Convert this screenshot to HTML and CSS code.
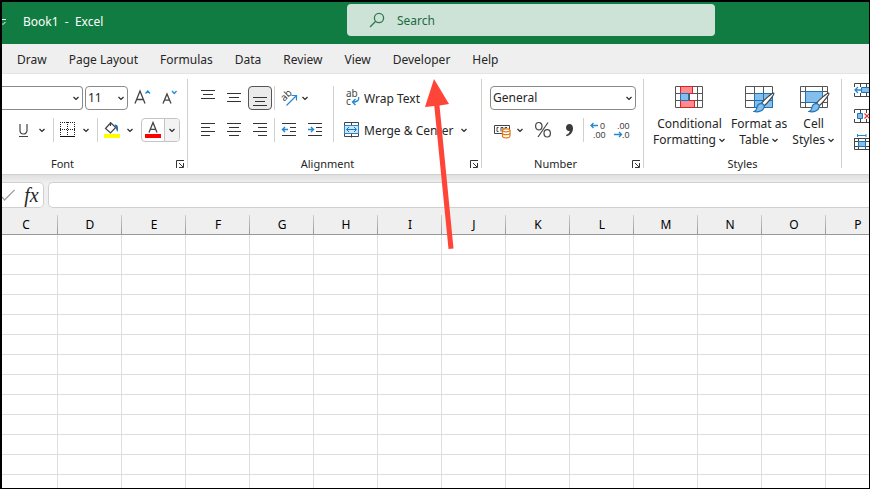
FILE: index.html
```
<!DOCTYPE html>
<html lang="en">
<head>
<meta charset="utf-8">
<title>Book1 - Excel</title>
<link rel="stylesheet" href="styles.css">
</head>
<body>
<svg class="defs" aria-hidden="true">
  <symbol id="caret" viewBox="0 0 8 8"><path d="M1.500 3 4 5.500 6.500 3" fill="none" stroke="#262626" stroke-width="1.200"/></symbol>
  <symbol id="launcher" viewBox="0 0 8 8"><path d="M.5 8V.5H8M3 3l4 4M7.500 3v4.500H3" fill="none" stroke="#333" stroke-width="1"/></symbol>
  <symbol id="brush" viewBox="0 0 22 22"><path d="M20.800 1.200c1.200 1-7 10.500-9.600 12.600L8.400 11.400C11 8 19.600.2 20.800 1.200Z" fill="#fff" stroke="#444" stroke-width="1.200"/><path d="M8.500 11.600c1.800.2 3 1.400 2.700 3.200-.6 3.800-5.200 5.800-10.200 4.700 1.900-.6 2.500-1.700 2.800-3.500.4-2.700 2.200-4.600 4.700-4.400Z" fill="#83beec" stroke="#1e73b8" stroke-width="1.200"/></symbol>
</svg>

<header class="titlebar">
  <div class="titlebar__left">
    <svg class="qat" width="4" height="8" viewBox="0 0 4 8"><path d="M0 1.500h4M0 5.500 1 6.500 3.500 4" fill="none" stroke="#fff"/></svg>
    <h1 class="titlebar__title">Book1 &nbsp;- &nbsp;Excel</h1>
  </div>
  <label class="search">
    <svg width="16" height="16" viewBox="0 0 16 16"><g fill="none" stroke="#2f7a50" stroke-width="1.300"><circle cx="10" cy="6" r="4.600"/><path d="M6.700 9.300 1 15"/></g></svg>
    <input type="search" placeholder="Search" aria-label="Search">
  </label>
</header>

<nav class="tabs">
  <a href="#">Draw</a><a href="#">Page Layout</a><a href="#">Formulas</a><a href="#">Data</a><a href="#">Review</a><a href="#">View</a><a href="#">Developer</a><a href="#">Help</a>
</nav>

<section class="ribbon" aria-label="Ribbon">
  <div class="group group--font">
    <div class="rows">
      <div class="row">
        <div class="combo combo--font"><select aria-label="Font"><option></option></select><svg width="8" height="8"><use href="#caret"/></svg></div>
        <div class="combo combo--size"><select aria-label="Font size"><option>11</option></select><svg width="8" height="8"><use href="#caret"/></svg></div>
        <button class="tool" aria-label="Increase font size"><svg width="18" height="18" viewBox="0 0 18 18"><path d="M2 14.500 7 2l5 12.500M3.700 10.500h6.600" fill="none" stroke="#444" stroke-width="1.300"/><path d="m12.500 4.500 2.300-2.500L17 4.500" fill="none" stroke="#2488d0" stroke-width="1.300"/></svg></button>
        <button class="tool" aria-label="Decrease font size"><svg width="18" height="18" viewBox="0 0 18 18"><path d="m4 14.500 4-9.500 4 9.500M5.400 11.200h5.200" fill="none" stroke="#444" stroke-width="1.300"/><path d="m13 2 2.300 2.500L17.500 2" fill="none" stroke="#2488d0" stroke-width="1.300"/></svg></button>
      </div>
      <div class="row row--format">
        <button class="tool" aria-label="Underline"><svg width="18" height="18" viewBox="0 0 18 18"><path d="M5 3v6.500a3.500 3.500 0 0 0 7 0V3M4 15.500h9" fill="none" stroke="#444" stroke-width="1.200"/></svg></button>
        <button class="caret" aria-label="Underline options"><svg width="8" height="8"><use href="#caret"/></svg></button>
        <i class="sep"></i>
        <button class="tool" aria-label="Borders"><svg width="16" height="16" viewBox="0 0 16 16"><path d="M0 .5h15M0 7.500h15M.5 0v14M7.500 0v14M14.500 0v14" fill="none" stroke="#222" stroke-dasharray="1 1"/><path d="M0 14.500h15" stroke="#111"/></svg></button>
        <button class="caret" aria-label="Border options"><svg width="8" height="8"><use href="#caret"/></svg></button>
        <i class="sep"></i>
        <button class="tool" aria-label="Fill color"><svg width="18" height="18" viewBox="0 0 18 18"><path d="M7.500 1v4M7 2.500 2.500 7.500l5 4.500 5.200-5.500L8 2" fill="#fff" stroke="#444" stroke-width="1.200"/><path d="M11.500 3.500c3-.8 4.500 2.500 3 7.500C13 9 13 6.500 11.500 3.500Z" fill="#1e6fb5"/><path d="M1 13h16v4H1z" fill="#ff0"/></svg></button>
        <button class="caret" aria-label="Fill color options"><svg width="8" height="8"><use href="#caret"/></svg></button>
        <span class="split">
          <button aria-label="Font color"><svg width="18" height="18" viewBox="0 0 18 18"><path d="M5 11.500 9 1.500l4 10M6.300 8.300h5.400" fill="none" stroke="#444" stroke-width="1.300"/><path d="M1 13h16v4H1z" fill="red"/></svg></button>
          <button class="split__more" aria-label="Font color options"><svg width="8" height="8"><use href="#caret"/></svg></button>
        </span>
      </div>
    </div>
    <div class="caption caption--font"><h2>Font</h2><button aria-label="Font settings"><svg width="8" height="8"><use href="#launcher"/></svg></button></div>
  </div>
  <i class="divider"></i>

  <div class="group group--align">
    <div class="cols">
      <div class="rows rows--align">
        <div class="row">
          <button class="tool" aria-label="Top align"><svg width="16" height="16" viewBox="0 0 16 16"><path d="M1 .5h14M3 4.500h10M1 8.500h14" stroke="#333"/></svg></button>
          <button class="tool" aria-label="Middle align"><svg width="16" height="16" viewBox="0 0 16 16"><path d="M1 3.500h14M3 7.500h10M1 11.500h14" stroke="#333"/></svg></button>
          <button class="tool tool--on" aria-label="Bottom align"><svg width="16" height="16" viewBox="0 0 16 16"><path d="M1 7.500h14M3 11.500h10M1 15.500h14" stroke="#333"/></svg></button>
          <i class="sep sep--tight"></i>
          <button class="tool tool--angle" aria-label="Orientation"><svg width="18" height="18" viewBox="0 0 18 18"><text class="glyph" transform="translate(5 12) rotate(-45)" x="-1" y="0">ab</text><path d="M6.500 16.500 16 7M11.500 6.500h5v5" fill="none" stroke="#2488d0" stroke-width="1.200"/></svg></button>
          <button class="caret" aria-label="Orientation options"><svg width="8" height="8"><use href="#caret"/></svg></button>
        </div>
        <div class="row">
          <button class="tool" aria-label="Align left"><svg width="16" height="16" viewBox="0 0 16 16"><path d="M1 1.500h14M1 5.500h9M1 9.500h14M1 13.500h9" stroke="#333"/></svg></button>
          <button class="tool" aria-label="Center"><svg width="16" height="16" viewBox="0 0 16 16"><path d="M1 1.500h14M3 5.500h10M1 9.500h14M3 13.500h10" stroke="#333"/></svg></button>
          <button class="tool" aria-label="Align right"><svg width="16" height="16" viewBox="0 0 16 16"><path d="M1 1.500h14M6 5.500h9M1 9.500h14M6 13.500h9" stroke="#333"/></svg></button>
          <i class="sep sep--tight"></i>
          <button class="tool" aria-label="Decrease indent"><svg width="16" height="16" viewBox="0 0 16 16"><path d="M1 1.500h14M9 5.500h6M9 9.500h6M1 13.500h14" stroke="#333"/><path d="M7 7.500H1.500M4 5 1.500 7.500 4 10" fill="none" stroke="#2488d0" stroke-width="1.400"/></svg></button>
          <button class="tool" aria-label="Increase indent"><svg width="16" height="16" viewBox="0 0 16 16"><path d="M1 1.500h14M9 5.500h6M9 9.500h6M1 13.500h14" stroke="#333"/><path d="M1 7.500h5.500M4 5l2.500 2.500L4 10" fill="none" stroke="#2488d0" stroke-width="1.400"/></svg></button>
        </div>
      </div>
      <div class="rows rows--merge">
        <button class="wide wide--wrap"><svg width="16" height="18" viewBox="0 0 16 18"><text class="glyph" x="2" y="8">ab</text><text class="glyph" x="2" y="16">c</text><path d="M14.500 8c1 3-1 5-6 5M11.500 10l-3 3 3 3" fill="none" stroke="#2488d0" stroke-width="1.400"/></svg><span>Wrap Text</span></button>
        <div class="row">
          <button class="wide wide--merge"><svg width="16" height="16" viewBox="0 0 16 16"><path d="M.5.5h14v14H.5zM.5 4.500h14M.5 11.500h14M7.500.5v4M7.500 11.500v4" fill="#fff" stroke="#444"/><path d="M.5 3.500h14v8H.5z" fill="#cfe6f8" stroke="#2488d0"/><path d="M2.500 7.500h10M5 5 2.500 7.500 5 10M10 5l2.500 2.500L10 10" fill="none" stroke="#1878c0"/></svg><span>Merge &amp; Center</span></button>
          <button class="caret" aria-label="Merge options"><svg width="8" height="8"><use href="#caret"/></svg></button>
        </div>
      </div>
    </div>
    <div class="caption"><h2>Alignment</h2><button aria-label="Alignment settings"><svg width="8" height="8"><use href="#launcher"/></svg></button></div>
  </div>
  <i class="divider"></i>

  <div class="group group--number">
    <div class="rows">
      <div class="combo combo--number"><select aria-label="Number format"><option>General</option></select><svg width="8" height="8"><use href="#caret"/></svg></div>
      <div class="row">
        <button class="tool" aria-label="Accounting number format"><svg width="18" height="18" viewBox="0 0 18 18"><path d="M9 12.500H1.500v-8h15V8" fill="none" stroke="#444"/><path d="M5.500 6.500H4v4h1.500M8 10.500v-4h2v2M12 8V6.500h2" fill="none" stroke="#444"/><path d="M9.500 9v6c0 2.500 7.500 2.500 7.500 0V9" fill="#fff" stroke="#e07818" stroke-width="1.200"/><ellipse cx="13.250" cy="9.300" rx="3.750" ry="1.500" fill="#fff" stroke="#e07818" stroke-width="1.200"/><path d="M9.500 12.200c0 2 7.500 2 7.500 0" fill="none" stroke="#e07818" stroke-width="1.200"/></svg></button>
        <button class="caret" aria-label="Accounting options"><svg width="8" height="8"><use href="#caret"/></svg></button>
        <button class="tool tool--percent" aria-label="Percent style"><svg width="18" height="18" viewBox="0 0 18 18"><g fill="none" stroke="#444" stroke-width="1.200"><ellipse cx="4.800" cy="5.200" rx="3.200" ry="3.700"/><ellipse cx="13.200" cy="12.300" rx="3.200" ry="3.700"/><path d="M14 1.500 4 16"/></g></svg></button>
        <button class="tool" aria-label="Comma style"><svg width="16" height="18" viewBox="0 0 16 18"><path d="M8.300 3c2.200 0 3.700 1.500 3.700 4.200 0 4-2.500 7-6.500 8l-.5-1.300c2.200-.8 3.500-2.200 3.700-4C6.700 10.500 5 9 5 6.600 5 4.500 6.500 3 8.300 3Z" fill="#3b3b3b"/></svg></button>
        <i class="sep sep--number"></i>
        <button class="tool" aria-label="Increase decimal"><svg width="18" height="18" viewBox="0 0 18 18"><text class="glyph glyph--digits" x="11" y="8">0</text><text class="glyph glyph--digits" x="4" y="17">.00</text><path d="M9 4.500H2M4.500 2 2 4.500 4.500 7" fill="none" stroke="#2488d0" stroke-width="1.300"/></svg></button>
        <button class="tool" aria-label="Decrease decimal"><svg width="18" height="18" viewBox="0 0 18 18"><text class="glyph glyph--digits" x="4" y="8">.00</text><text class="glyph glyph--digits" x="9" y="17">.0</text><path d="M1 13.500h7.500M6 11l2.500 2.500L6 16" fill="none" stroke="#2488d0" stroke-width="1.300"/></svg></button>
      </div>
    </div>
    <div class="caption"><h2>Number</h2><button aria-label="Number settings"><svg width="8" height="8"><use href="#launcher"/></svg></button></div>
  </div>
  <i class="divider"></i>

  <div class="group group--styles">
    <div class="cols cols--styles">
      <button class="big"><svg width="32" height="30" viewBox="0 0 32 30"><path d="M2.500.5h27v21h-27zM2.500 7.500h27M2.500 14.500h27M7.500.5v21M16.500.5v21M24.500.5v21" fill="#fff" stroke="#555"/><path d="M7.500.5h12v7h-12zM7.500 14.500h14v7h-14z" fill="#ff8b90" stroke="#e02020"/><path d="M7.500 7.500h8v7h-8z" fill="#83beec" stroke="#1e73b8"/></svg><span>Conditional</span><span>Formatting <svg width="8" height="8"><use href="#caret"/></svg></span></button>
      <button class="big"><svg width="32" height="30" viewBox="0 0 32 30"><path d="M2.500.5h27v21h-27zM2.500 7.500h27M2.500 14.500h27M11.500.5v21M20.500.5v21" fill="#fff" stroke="#555"/><path d="M11.500 7.500h18v14h-18zM11.500 14.500h18M20.500 7.500v14" fill="#83beec" stroke="#1e73b8"/><use href="#brush" x="10" y="6" width="22" height="22"/></svg><span>Format as</span><span>Table <svg width="8" height="8"><use href="#caret"/></svg></span></button>
      <button class="big"><svg width="32" height="30" viewBox="0 0 32 30"><path d="M2.500.5h27v21h-27zM2.500 5.500h27M2.500 16.500h27M7.500.5v21M24.500.5v21" fill="#fff" stroke="#555"/><path d="M7.500 5.500h17v11h-17z" fill="#83beec" stroke="#1e73b8"/><use href="#brush" x="10" y="6" width="22" height="22"/></svg><span>Cell</span><span>Styles <svg width="8" height="8"><use href="#caret"/></svg></span></button>
    </div>
    <div class="caption"><h2>Styles</h2></div>
  </div>
  <i class="divider"></i>

  <div class="group group--cells">
    <button aria-label="Insert cells"><svg width="20" height="16" viewBox="0 0 20 16"><path d="M.5 5V1.500h19V5M.5 11v3.500h19V11M6.500 1.500V5M12.500 1.500V5M6.500 11v3.500M12.500 11v3.500" fill="none" stroke="#444"/><path d="M7.500 5.500h12v5h-12z" fill="#83beec" stroke="#1e73b8"/><path d="M8 8H1M4 5 1 8l3 3" fill="none" stroke="#2488d0" stroke-width="1.300"/></svg></button>
    <button aria-label="Delete cells"><svg width="20" height="16" viewBox="0 0 20 16"><path d="M.5 5V1.500h19V5M.5 11v3.500h19V11M6.500 1.500V5M12.500 1.500V5M6.500 11v3.500M12.500 11v3.500" fill="none" stroke="#444"/><path d="M3.500 5.500h5v5h-5z" fill="#83beec" stroke="#1e73b8"/><path d="m10.500 5.500 5 5M15.500 5.500l-5 5" stroke="#e83030" stroke-width="1.200"/></svg></button>
    <button aria-label="Format cells"><svg width="20" height="18" viewBox="0 0 20 18"><path d="M.5 4v11.500h19V4.500H.5M.5 7.500h19M.5 12.500h19M4.500 4.500v11M11.500 4.500v11" fill="none" stroke="#444"/><path d="M4.500 7.500h7v5h-7z" fill="#83beec" stroke="#1e73b8"/><path d="M3 1.500h9M3.500 0v3M12 0v3" stroke="#2488d0"/></svg></button>
  </div>
</section>

<div class="formula">
  <div class="formula__tools">
    <button aria-label="Enter"><svg width="14" height="14" viewBox="0 0 14 14"><path d="m0 9 2.500 3L12.500 2" fill="none" stroke="#a0a0a0" stroke-width="1.200"/></svg></button>
    <button class="fx" aria-label="Insert function">fx</button>
  </div>
  <input type="text" aria-label="Formula bar">
</div>

<main class="sheet">
  <table>
    <thead><tr><th>C</th><th>D</th><th>E</th><th>F</th><th>G</th><th>H</th><th>I</th><th>J</th><th>K</th><th>L</th><th>M</th><th>N</th><th>O</th><th>P</th></tr></thead>
    <tbody id="cells"></tbody>
  </table>
</main>

<svg class="pointer" width="30" height="172" viewBox="0 0 30 172" aria-hidden="true"><path d="M10 0 1 28l9.300-1L24.500 170l5-.5L15.500 26.500 25 25Z" fill="#ff4438"/></svg>
<script src="sheet.js"></script>
</body>
</html>
```
FILE: sheet.js
```
const body = document.getElementById('cells');
for (let r = 0; r < 13; r++) {
  const row = body.insertRow();
  for (let c = 0; c < 14; c++) row.insertCell();
}
```
FILE: styles.css
```
* { box-sizing: border-box; }

html { height: 100%; }

body {
  position: relative;
  display: flex;
  flex-direction: column;
  height: 100%;
  margin: 0;
  overflow: hidden;
  border: solid #000;
  border-width: 2px 1px 1px 2px;
  background: #fff;
  color: #262626;
  font: 12px/16px "Noto Sans", "Open Sans", sans-serif;
}

button, input, select { font: inherit; color: inherit; }
svg { display: block; flex: none; overflow: visible; }
h1, h2 { margin: 0; font: inherit; }

button {
  display: flex;
  align-items: center;
  justify-content: center;
  padding: 0;
  border: 0;
  background: none;
}

.defs { position: absolute; width: 0; height: 0; }

/* Title bar */
.titlebar {
  display: grid;
  grid-template-columns: 345fr 368fr 154fr;
  flex: none;
  height: 42px;
  padding: 2px 0 6px;
  background: #107c41;
  color: #fff;
}
.titlebar__left { display: flex; align-items: center; gap: 17px; padding-top: 2px; }
.search {
  display: flex;
  align-items: center;
  gap: 12px;
  height: 32px;
  padding: 0 22px;
  border-radius: 4px;
  background: #cee3d7;
}
.search input {
  flex: 1;
  min-width: 0;
  padding: 2px 0 0;
  border: 0;
  outline: 0;
  background: none;
}
.search input::placeholder { color: #1b6a3f; opacity: 1; }

/* Tabs */
.tabs {
  display: flex;
  flex: none;
  align-items: center;
  gap: 22px;
  height: 30px;
  padding: 2px 0 0 15px;
  border-bottom: 1px solid #e4e4e4;
  background: #efefef;
}
.tabs a { color: inherit; text-decoration: none; white-space: nowrap; }

/* Ribbon */
.ribbon { display: flex; flex: none; height: 100px; background: #fff; }
.divider { flex: none; width: 1px; margin: 5px 0 6px; background: #d0d0d0; }
.group {
  display: flex;
  flex: none;
  flex-direction: column;
  padding: 12px 0 2px;
}
.group--font { width: 185px; }
.group--align { width: 293px; }
.group--number { width: 161px; }
.group--styles { width: 197px; }
.rows { display: flex; flex-direction: column; gap: 8px; }
.row { display: flex; align-items: center; height: 24px; }
.cols { display: flex; }

.tool { flex: none; width: 24px; height: 24px; }
.tool--on { border: 1px solid #555; border-radius: 4px; background: #ebebeb; }
.caret { flex: none; width: 12px; height: 24px; }
.sep { flex: none; width: 1px; height: 24px; margin: 0 2px 0 5px; background: #d0d0d0; }
.sep--tight { margin: 0; }

.combo { position: relative; flex: none; height: 24px; }
.combo select {
  appearance: none;
  display: block;
  width: 100%;
  height: 24px;
  padding: 0 0 0 2px;
  border: 1px solid #8a8a8a;
  border-radius: 4px;
  background: #fff;
}
.combo svg { position: absolute; top: 8px; right: 3px; pointer-events: none; }
.combo--font { width: 81px; }
.combo--font select { border-left: 0; border-radius: 0 4px 4px 0; }
.combo--size { width: 43px; margin: 0 2px; }
.combo--size + .tool { margin-right: 2px; }

.row--format { padding-left: 10px; }
.split {
  display: flex;
  width: 39px;
  height: 24px;
  margin-left: 5px;
  overflow: hidden;
  border: 1px solid #c4c4c4;
  border-radius: 4px;
}
.split button { width: 22px; }
.split .split__more { width: 15px; border-left: 1px solid #c4c4c4; background: #f3f3f3; }

.rows--align { width: 146px; padding-left: 8px; border-right: 1px solid #d0d0d0; }
.rows--align .row { gap: 2px; }
.rows--align .tool--angle + .caret { margin-left: -4px; }
.rows--merge { padding-left: 10px; }
.wide { gap: 4px; height: 24px; justify-content: flex-start; white-space: nowrap; }
.wide span { padding-top: 2px; }
.wide--merge { width: 114px; }

.group--number { padding-left: 8px; }
.combo--number { width: 146px; }
.tool--percent { margin: 0 2px 0 5px; }
.sep--number { margin: 0 2px; }
.group--number .caption { margin-left: -8px; }

.cols--styles { gap: 5px; padding-left: 9px; }
.big {
  flex-direction: column;
  justify-content: flex-start;
  height: 62px;
  white-space: nowrap;
}
.big span { display: flex; align-items: center; gap: 2px; }

.caption { display: flex; align-items: center; margin-top: auto; font-size: 11px; }
.caption h2 { flex: 1; text-align: center; }
.caption button { width: 14px; height: 16px; }
.caption--font h2 { padding-right: 50px; }

.group--cells {
  flex: 1;
  gap: 10px;
  align-items: flex-start;
  min-width: 0;
  padding: 8px 0 0 12px;
  overflow: hidden;
}

/* Formula bar */
.formula {
  display: flex;
  flex: none;
  gap: 4px;
  padding-top: 7px;
  border-top: 1px solid #cfcfcf;
  background: linear-gradient(#e0e0e0, #efefef 8px);
}
.formula__tools {
  display: flex;
  width: 42px;
  height: 26px;
  border: 1px solid #d0d0d0;
  border-left: 0;
  border-radius: 0 5px 5px 0;
  background: #fff;
}
.fx { flex: 1; padding-left: 4px; font: italic 20px/20px "Liberation Serif", serif; }
.formula input {
  flex: 1;
  min-width: 0;
  height: 26px;
  border: 1px solid #d0d0d0;
  border-right: 0;
  border-radius: 5px 0 0 5px;
  background: #fff;
}

/* Sheet: the first visible column is scrolled partly out of view */
.sheet { flex: 1; min-height: 0; overflow: hidden; }
table {
  width: 896px;
  margin-left: -8px;
  border-collapse: separate;
  border-spacing: 0;
  table-layout: fixed;
}
th {
  height: 27px;
  padding: 8px 0 0;
  border-bottom: 1px solid #999;
  background: linear-gradient(#ccc, #999) right bottom / 1px 19px no-repeat #efefef;
  color: #000;
  font-weight: 400;
}
td {
  height: 20px;
  padding: 0;
  border: solid #dedede;
  border-width: 0 1px 1px 0;
}

/* Red arrow that points at the Developer tab */
.pointer { position: absolute; top: 77px; left: 422px; pointer-events: none; }

.glyph { fill: #444; font: 10px "Noto Sans", sans-serif; }
.glyph--digits { font: 9px "Liberation Sans", sans-serif; }
```
